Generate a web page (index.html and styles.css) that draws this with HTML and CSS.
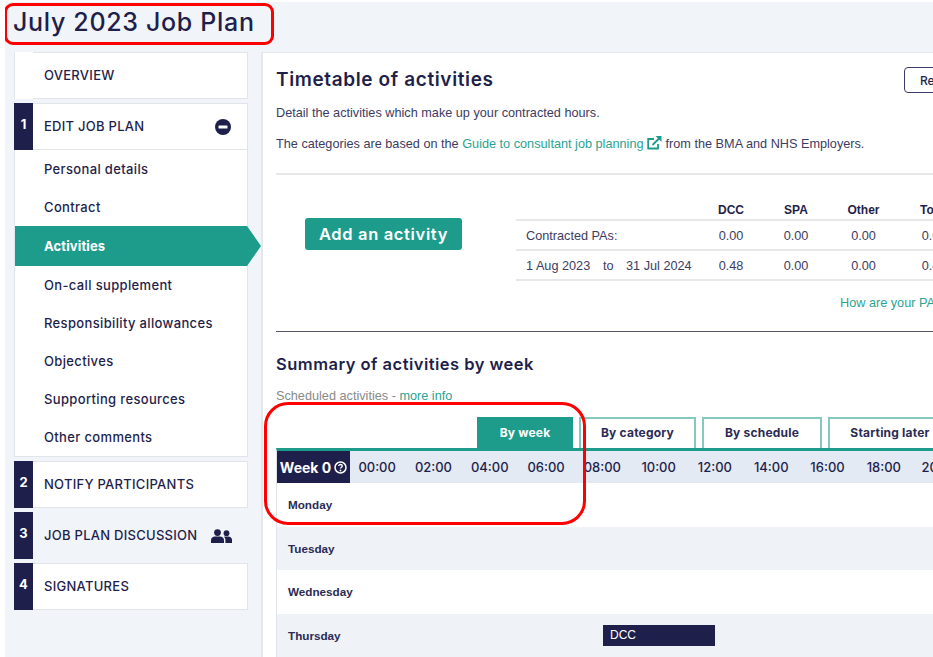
FILE: index.html
```html
<!DOCTYPE html>
<html lang="en">
<head>
<meta charset="utf-8">
<title>July 2023 Job Plan</title>
<link rel="stylesheet" href="styles.css">
</head>
<body>
<div class="page">
  <h1 class="title">July 2023 Job Plan</h1>
  <div class="columns">
    <nav class="side">
      <div class="step"><span class="num num-empty"></span><span class="step-label">OVERVIEW</span></div>
      <div class="step step-edit"><span class="num">1</span><span class="step-label">EDIT JOB PLAN</span>
        <svg class="step-icon" width="18" height="18" viewBox="0 0 18 18"><circle cx="9" cy="9" r="8" fill="#1f1f4b"/><rect x="4.5" y="7.5" width="9" height="3" rx=".5" fill="#fff"/></svg>
      </div>
      <ul class="sub">
        <li>Personal details</li>
        <li>Contract</li>
        <li class="active">Activities</li>
        <li>On-call supplement</li>
        <li>Responsibility allowances</li>
        <li>Objectives</li>
        <li>Supporting resources</li>
        <li>Other comments</li>
      </ul>
      <div class="step step-gap"><span class="num">2</span><span class="step-label">NOTIFY PARTICIPANTS</span></div>
      <div class="step step-gap step-plain"><span class="num">3</span><span class="step-label">JOB PLAN DISCUSSION</span>
        <svg class="step-icon" width="21" height="14" viewBox="0 0 21 14"><circle cx="6.5" cy="3.6" r="3.4" fill="#1f1f4b"/><path d="M0 14v-2.6C0 8.8 2 7.6 4 7.6h5c2 0 4 1.2 4 3.8V14z" fill="#1f1f4b"/><circle cx="15.5" cy="4.2" r="2.9" fill="#1f1f4b"/><path d="M14.4 14v-3c0-1.300-.5-2.400-1.400-3.200.6-.3 1.200-.4 1.800-.4h2.400c2.200 0 3.800 1.300 3.800 3.400V14z" fill="#1f1f4b"/></svg>
      </div>
      <div class="step step-gap"><span class="num">4</span><span class="step-label">SIGNATURES</span></div>
    </nav>
    <main class="panel">
      <div class="panel-head">
        <h2 class="h-main">Timetable of activities</h2>
        <button class="reset">Reset</button>
      </div>
      <p class="para para-first">Detail the activities which make up your contracted hours.</p>
      <p class="para">The categories are based on the <a class="link">Guide to consultant job planning</a>
        <svg class="ext" width="15" height="14" viewBox="0 0 15 14"><path d="M11 8v4.500H1.200V3H7" fill="none" stroke="#1d9c8c" stroke-width="1.800"/><path d="M5.500 9 12 2.500" stroke="#1d9c8c" stroke-width="1.800" fill="none"/><path d="M8.500 0H14.500V6z" fill="#1d9c8c"/></svg>
        from the BMA and NHS Employers.</p>
      <hr class="rule-light">
      <div class="pa-row">
        <div class="add-wrap"><button class="add">Add an activity</button></div>
        <div class="pa-area">
          <table class="pa">
            <thead>
              <tr><th class="c-label"></th><th>DCC</th><th>SPA</th><th>Other</th><th>Total</th></tr>
            </thead>
            <tbody>
              <tr><td class="c-label">Contracted PAs:</td><td>0.00</td><td>0.00</td><td>0.00</td><td>0.00</td></tr>
              <tr><td class="c-label"><span class="d1">1 Aug 2023</span><span class="d2">to</span>31 Jul 2024</td><td>0.48</td><td>0.00</td><td>0.00</td><td>0.48</td></tr>
            </tbody>
          </table>
          <a class="link how">How are your PAs calculated?</a>
        </div>
      </div>
      <hr class="rule-dark">
      <h3 class="h-sub">Summary of activities by week</h3>
      <p class="sched">Scheduled activities - <a class="link">more info</a></p>
      <div class="tabs">
        <span class="tab tab-on t1">By week</span>
        <span class="tab t2">By category</span>
        <span class="tab t3">By schedule</span>
        <span class="tab t4">Starting later</span>
      </div>
      <div class="grid">
        <div class="g-head">
          <div class="week">Week 0
            <svg width="13" height="13" viewBox="0 0 13 13"><circle cx="6.500" cy="6.500" r="5.500" fill="none" stroke="#fff" stroke-width="1.500"/><path d="M4.700 5.100c0-1 .8-1.600 1.800-1.600s1.800.6 1.800 1.500c0 1.300-1.800 1.300-1.800 2.600" fill="none" stroke="#fff" stroke-width="1.300"/><circle cx="6.500" cy="9.500" r=".9" fill="#fff"/></svg>
          </div>
          <span>00:00</span><span>02:00</span><span>04:00</span><span>06:00</span><span>08:00</span><span>10:00</span><span>12:00</span><span>14:00</span><span>16:00</span><span>18:00</span><span>20:00</span>
        </div>
        <div class="g-row">Monday</div>
        <div class="g-row g-alt">Tuesday</div>
        <div class="g-row">Wednesday</div>
        <div class="g-row g-alt">Thursday<span class="block">DCC</span></div>
      </div>
    </main>
  </div>
  <div class="mark mark-title"></div>
  <div class="mark mark-grid"></div>
</div>
</body>
</html>
```
FILE: styles.css
```css
* { box-sizing: border-box; }
html, body { margin: 0; padding: 0; height: 657px; overflow: hidden; background: #fff; }
body { font-family: "Liberation Sans", Arial, sans-serif; color: #3c3c62; }
.page { position: relative; width: 933px; overflow: hidden; margin-left: 5px; margin-top: 2px; background: #f1f4f8; height: 655px; }
.title { margin: 0; height: 50px; padding: 5px 0 0 8px; font: 500 25px/30px Inter, sans-serif; letter-spacing: .68px; color: #1f1f4b; }
.columns { display: flex; align-items: flex-start; padding-left: 9px; gap: 13px; }

.side { width: 234px; flex: none; font-family: Inter, sans-serif; color: #1f1f4b; }
.step { display: flex; align-items: center; height: 47px; background: #fff; border: 1px solid #e1e4e9; border-left: 0; position: relative; }
.step-edit { margin-top: 4px; }
.step-gap { margin-top: 4px; }
.step-plain { background: #f1f4f8; border-color: transparent; }
.num { width: 19px; align-self: stretch; margin: -1px 0; background: #1f1f4b; color: #fff; font: 700 13px/42px Inter, sans-serif; text-align: center; flex: none; }
.num-empty { background: #fff; border-left: 1px solid #e1e4e9; }
.step-label { margin-left: 11px; font-size: 13px; font-weight: 500; letter-spacing: .27px; flex: 1; padding-bottom: 1px; }
.step-icon { margin-right: 15px; flex: none; }
.sub { list-style: none; margin: 0; padding: 0; height: 307px; background: #fff; border: 1px solid #e1e4e9; border-top: 0; border-bottom-width: 1px; }
.sub li { height: 38px; padding-left: 29px; font-size: 13px; font-weight: 500; line-height: 38px; letter-spacing: .35px; }
.sub .active { position: relative; height: 40px; background: #1d9c8c; color: #fff; font-weight: 700; line-height: 40px; letter-spacing: .12px; }
.sub .active::after { content: ""; position: absolute; left: 232px; top: 0; border-left: 14px solid #1d9c8c; border-top: 20px solid transparent; border-bottom: 20px solid transparent; }

.panel { width: 800px; flex: none; height: 620px; background: #fff; border: 1px solid #e4e7eb; border-left-width: 2px; border-bottom: 0; padding: 0 0 0 13px; }
.panel-head { display: flex; justify-content: space-between; align-items: center; height: 52px; padding-top: 2px; }
.h-main { margin: 0; font: 600 19px/24px Inter, sans-serif; letter-spacing: .62px; color: #1f1f4b; }
.reset { width: 80px; height: 26px; margin-right: 76px; padding: 0 0 0 15px; text-align: left; background: #fff; border: 1px solid #3c3c62; border-radius: 4px; font: 500 12px Inter, sans-serif; color: #1f1f4b; }
.para { margin: 0; font-size: 12.700px; line-height: 14px; height: 30px; white-space: nowrap; }
.para-first { margin-top: 1px; }
.link { color: #2aa392; }
.ext { vertical-align: -2px; }
.rule-light { margin: 7px 0 0; height: 2px; border: 0; background: #e8e8e8; }
.pa-row { display: flex; height: 156px; }
.add-wrap { width: 240px; flex: none; padding: 43px 0 0 29px; }
.add { width: 157px; height: 32px; padding: 0; border: 0; border-radius: 3px; background: #1d9c8c; color: #fff; font: 600 16.500px/32px Inter, sans-serif; letter-spacing: .65px; }
.pa-area { width: 460px; flex: none; }
.pa { border-collapse: collapse; table-layout: fixed; width: 454px; margin-top: 25px; font-size: 12.700px; }
.pa th { height: 20px; padding: 0; border-bottom: 2px solid #e8e8e8; font-weight: 700; font-size: 12px; color: #1f1f4b; text-align: center; }
.pa td { height: 30px; padding: 1px 0 0; border-bottom: 2px solid #e8e8e8; text-align: center; }
.pa th:nth-child(2), .pa td:nth-child(2) { width: 64px; }
.pa th:nth-child(3), .pa td:nth-child(3) { width: 66px; }
.pa th:nth-child(4), .pa td:nth-child(4) { width: 69px; }
.pa th:nth-child(5), .pa td:nth-child(5) { width: 72px; }
.pa .c-label { width: 183px; padding-left: 10px; text-align: left; white-space: nowrap; }
.d1 { display: inline-block; width: 77px; }
.d2 { display: inline-block; width: 23px; }
.how { display: block; margin: 14px 0 0 324px; font-size: 12.700px; line-height: 16px; white-space: nowrap; }
.rule-dark { margin: 0; height: 1px; border: 0; background: #55556e; }
.h-sub { margin: 0; padding-top: 21px; height: 52px; font: 600 16.500px/22px Inter, sans-serif; letter-spacing: .48px; color: #1f1f4b; }
.sched { margin: 0; height: 33px; padding-top: 5px; font-size: 12.700px; line-height: 14px; color: #8a8a8a; }
.tabs { display: flex; height: 31px; padding-left: 201px; gap: 6px; align-items: stretch; }
.tab { display: flex; align-items: center; justify-content: center; padding-bottom: 2px; background: #fff; border: 2px solid #84c9bf; border-bottom: 0; font: 700 12px Inter, sans-serif; letter-spacing: .2px; color: #2b2b55; }
.tab-on { background: #1d9c8c; border-color: #1d9c8c; color: #fff; }
.t1 { width: 96px; }
.t2 { width: 117px; }
.t3 { width: 120px; }
.t4 { width: 124px; flex: none; }
.grid { width: 760px; border-top: 3px solid #1d9c8c; border-left: 1px solid #dfe2e6; }
.g-head { display: grid; grid-template-columns: 72px repeat(11, 56.300px); align-items: center; height: 32px; background: #e4eaf3; font: 500 13px Inter, sans-serif; color: #1f1f4b; text-align: center; }
.week { display: flex; align-items: center; justify-content: center; gap: 3px; margin-right: -1px; align-self: stretch; background: #1f1f4b; color: #fff; font-weight: 700; font-size: 14px; white-space: nowrap; }
.g-row { position: relative; height: 43.500px; padding-left: 11px; font-size: 11.700px; font-weight: 700; line-height: 43px; color: #2b2b55; }
.g-alt { background: #eff2f7; }
.block { position: absolute; left: 326px; top: 11px; width: 112px; height: 21px; padding-left: 7px; background: #1f1f4b; color: #fff; font-size: 12px; font-weight: 400; line-height: 21px; }

.mark { position: absolute; border: 3px solid #f00; pointer-events: none; }
.mark-title { left: -1px; top: 1px; width: 270px; height: 42px; border-radius: 9px; }
.mark-grid { left: 259px; top: 400px; width: 322px; height: 123px; border-radius: 24px; }
```
